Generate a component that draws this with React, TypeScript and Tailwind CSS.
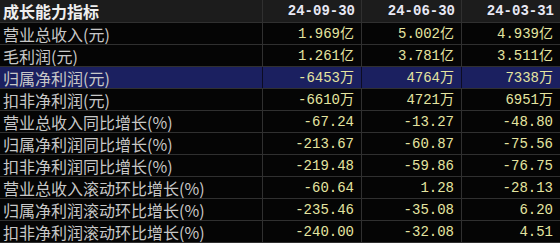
const cjk = "font-['Noto_Sans_CJK_SC','Noto_Sans',sans-serif]";
const mono = "font-['Liberation_Mono','Noto_Sans_CJK_SC',monospace]";

const dates = ['24-09-30', '24-06-30', '24-03-31'];

const rows: { label: string; values: string[]; active?: boolean }[] = [
  { label: '营业总收入(元)', values: ['1.969亿', '5.002亿', '4.939亿'] },
  { label: '毛利润(元)', values: ['1.261亿', '3.781亿', '3.511亿'] },
  { label: '归属净利润(元)', values: ['-6453万', '4764万', '7338万'], active: true },
  { label: '扣非净利润(元)', values: ['-6610万', '4721万', '6951万'] },
  { label: '营业总收入同比增长(%)', values: ['-67.24', '-13.27', '-48.80'] },
  { label: '归属净利润同比增长(%)', values: ['-213.67', '-60.87', '-75.56'] },
  { label: '扣非净利润同比增长(%)', values: ['-219.48', '-59.86', '-76.75'] },
  { label: '营业总收入滚动环比增长(%)', values: ['-60.64', '1.28', '-28.13'] },
  { label: '归属净利润滚动环比增长(%)', values: ['-235.46', '-35.08', '6.20'] },
  { label: '扣非净利润滚动环比增长(%)', values: ['-240.00', '-32.08', '4.51'] },
];

export default function App() {
  return (
    <div className="flex h-[243px] w-[560px] flex-col gap-px overflow-hidden bg-[#303030]">
      <div className="grid h-[22px] grid-cols-[262px_98px_99px_98px] gap-px bg-[#303030]">
        <div
          className={`flex items-center bg-[#1c1c1c] pl-[3px] text-[16px] leading-none font-bold text-[#eeeeee] ${cjk}`}
        >
          成长能力指标
        </div>
        {dates.map((d) => (
          <div
            key={d}
            className={`flex items-center justify-end bg-[#1c1c1c] pr-[6px] text-[14px] leading-none font-bold text-[#e8e8f4] ${mono}`}
          >
            {d}
          </div>
        ))}
      </div>
      {rows.map((r) => (
        <div
          key={r.label}
          className={`grid h-[21px] grid-cols-[262px_98px_99px_98px] gap-px ${
            r.active ? 'bg-[#0c0c24]' : 'bg-[#303030]'
          }`}
        >
          <div
            className={`flex items-center pl-[3px] text-[16px] leading-none text-[#c8c8c8] ${cjk} ${
              r.active ? 'bg-[#1b2060]' : 'bg-[#050505]'
            }`}
          >
            {r.label}
          </div>
          {r.values.map((v, i) => (
            <div
              key={i}
              className={`flex items-center justify-end pr-[7px] text-[14px] leading-none text-[#e4e4a0] ${mono} ${
                r.active ? 'bg-[#1b2060]' : 'bg-[#050505]'
              }`}
            >
              {v}
            </div>
          ))}
        </div>
      ))}
    </div>
  );
}
